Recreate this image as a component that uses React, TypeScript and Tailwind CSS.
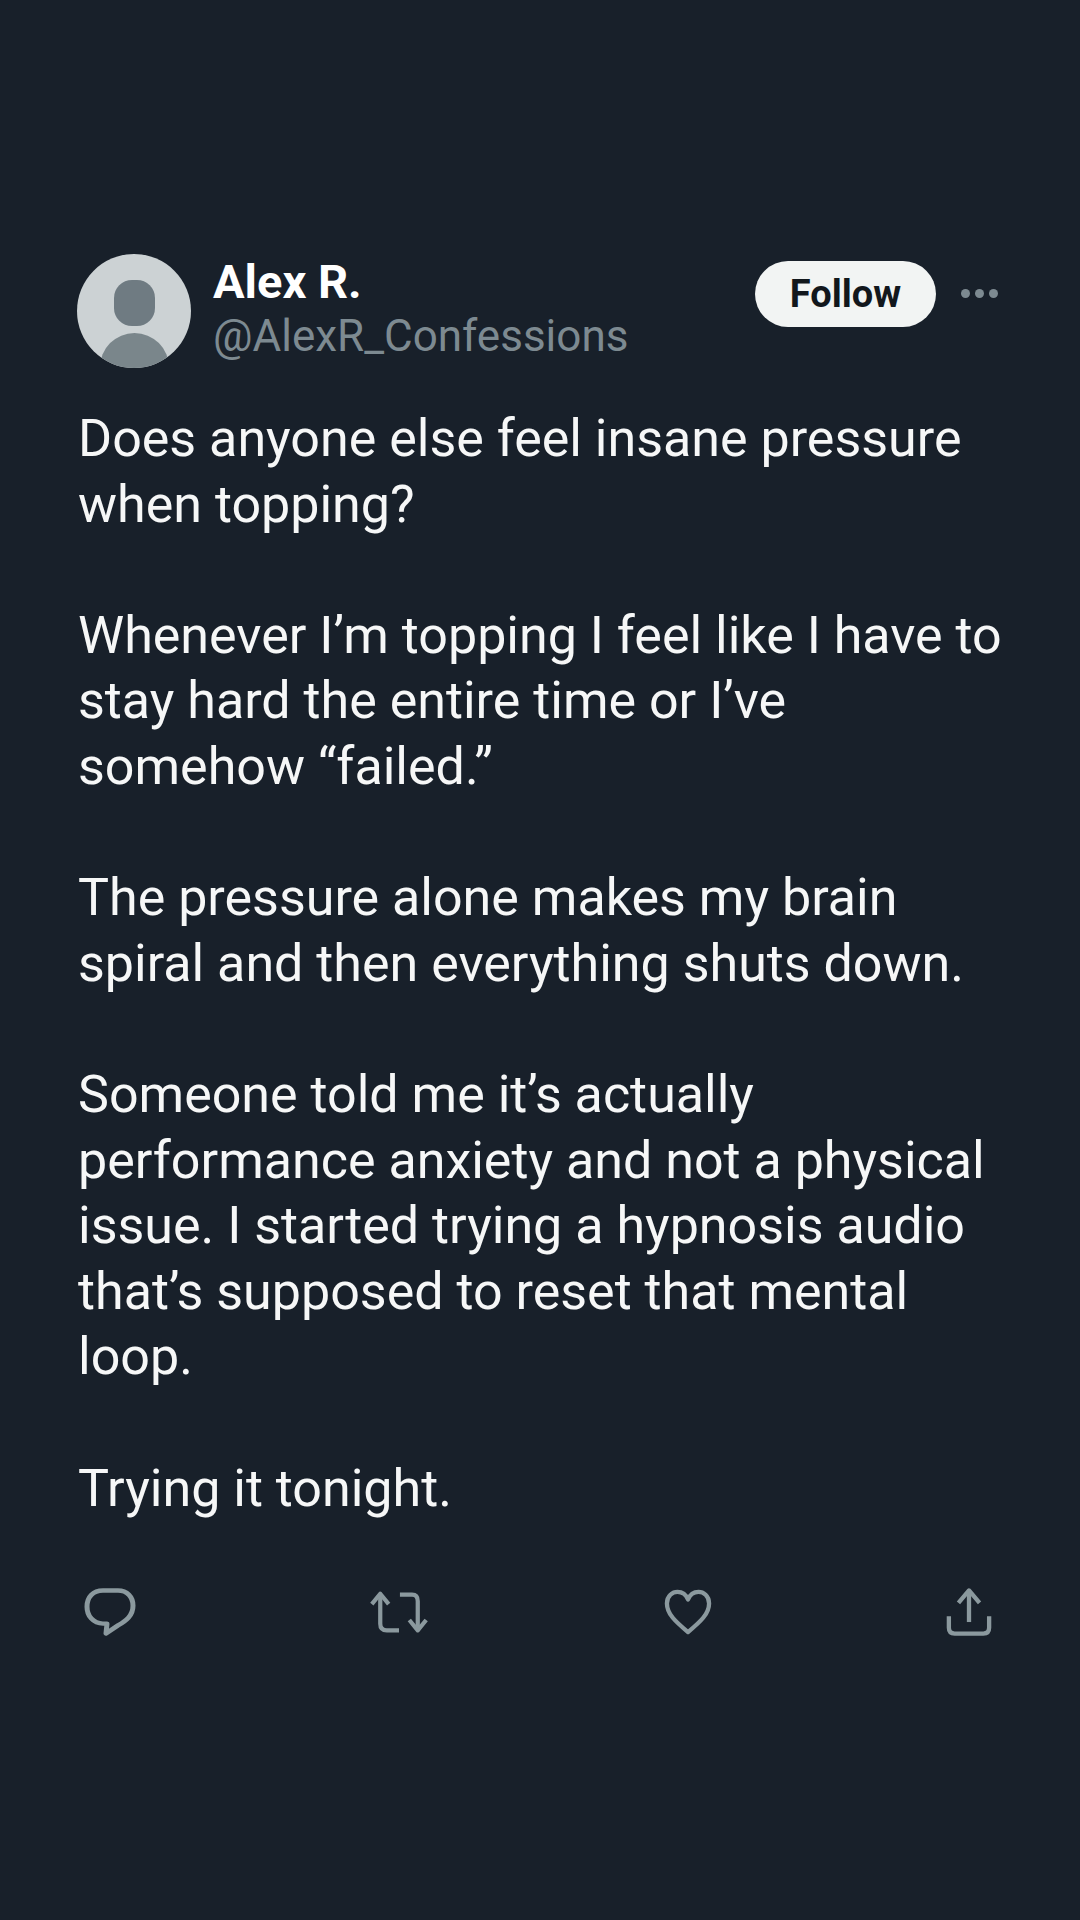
const lines = [
  ["Does anyone else feel insane pressure", "when topping?"],
  ["Whenever I’m topping I feel like I have to", "stay hard the entire time or I’ve", "somehow “failed.”"],
  ["The pressure alone makes my brain", "spiral and then everything shuts down."],
  ["Someone told me it’s actually", "performance anxiety and not a physical", "issue. I started trying a hypnosis audio", "that’s supposed to reset that mental", "loop."],
  ["Trying it tonight."],
];

function Avatar() {
  return (
    <div className="relative h-[114px] w-[114px] shrink-0 overflow-hidden rounded-full bg-[#ccd2d4]">
      <div className="absolute left-[37px] top-[26px] h-[46px] w-[41px] rounded-[18px] bg-[#6f7b82]" />
      <div className="absolute left-[23px] top-[79px] h-[60px] w-[69px] rounded-t-[35px] bg-[#7a868b]" />
    </div>
  );
}

export default function App() {
  return (
    <div className="flex h-[1920px] w-[1080px] flex-col bg-[#18202a] pt-[254px] font-['Roboto','Liberation_Sans',sans-serif] text-white">
      <div className="flex pl-[77px] pr-[82px]">
        <Avatar />
        <div className="ml-[22px] flex-1 pt-[3px]">
          <div className="text-[47px] font-bold leading-[50px] text-white">Alex R.</div>
          <div className="mt-[3px] text-[44px] leading-[52px] text-[#7d8a91]">@AlexR_Confessions</div>
        </div>
        <button className="mt-[7px] h-[66px] w-[181px] rounded-full bg-[#f2f4f3] text-[38px] font-bold text-[#12171c]">Follow</button>
        <div className="ml-[25px] mt-[35px] flex h-[9px] gap-[5px]">
          <span className="h-[9px] w-[9px] rounded-full bg-[#7d8a91]" />
          <span className="h-[9px] w-[9px] rounded-full bg-[#7d8a91]" />
          <span className="h-[9px] w-[9px] rounded-full bg-[#7d8a91]" />
        </div>
      </div>

      <div className="mt-[38px] flex flex-col gap-[65.6px] pl-[78px] text-[52px] leading-[65.6px] text-[#f6f7f7]">
        {lines.map((para) => (
          <p key={para[0]}>
            {para.map((line) => (
              <span key={line} className="block whitespace-nowrap">{line}</span>
            ))}
          </p>
        ))}
      </div>

      <div className="mt-[66px] flex items-start justify-between pl-[84px] pr-[88px] text-[#8b999e]">
        <svg width="52" height="50" viewBox="0 0 52 56" fill="none" stroke="currentColor" strokeWidth="5" preserveAspectRatio="none">
          <path d="M19 4h15c9 0 15 7 15 17 0 11-7 17-15 22l-12 9 1-11h-4C9 41 3 32 3 22 3 11 9 4 19 4z" strokeLinejoin="round" />
        </svg>
        <svg width="60" height="45" viewBox="0 0 60 48" fill="none" stroke="currentColor" strokeWidth="4.5" strokeLinejoin="round" className="mt-[3px]">
          <path d="M10 6v30q0 7 7 7h13" />
          <path d="M1 15l9-11 9 11" />
          <path d="M31 5h13q6 0 6 7v30" />
          <path d="M41 32l9 11 9-11" />
        </svg>
        <svg width="50" height="46" viewBox="0 0 50 48" fill="none" stroke="currentColor" strokeWidth="4.5" strokeLinejoin="round" className="mt-[2px]">
          <path d="M25 45C12 34 3 26 3 15 3 7 9 3 14 3c5 0 9 3 11 8 2-5 6-8 11-8 5 0 11 4 11 12 0 11-9 19-22 30z" />
        </svg>
        <svg width="46" height="49" viewBox="0 0 48 50" fill="none" stroke="currentColor" strokeWidth="4.5">
          <path d="M24 36V4" />
          <path d="M13 16L24 3l11 13" strokeLinejoin="round" />
          <path d="M3 30v12q0 6 6 6h30q6 0 6-6V30" />
        </svg>
      </div>
    </div>
  );
}
